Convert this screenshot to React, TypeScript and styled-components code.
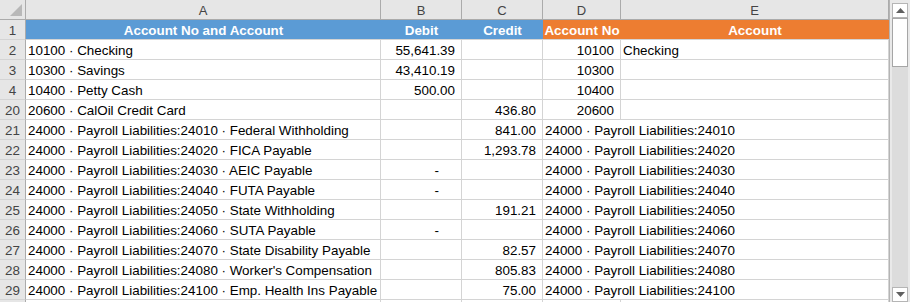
import React from 'react';
import styled, { createGlobalStyle } from 'styled-components';

const GlobalStyle = createGlobalStyle`
  html, body {
    margin: 0;
    padding: 0;
    background: #fff;
    overflow: hidden;
  }
  body {
    font-family: 'Liberation Sans', Arial, sans-serif;
  }
`;

// 한 행의 데이터
interface IRow {
  num: string;
  account: string;
  debit?: string;
  credit?: string;
  accNo: string;
  accName?: string;
  spill?: boolean;
}

const rows: IRow[] = [
  { num: '2', account: '10100 · Checking', debit: '55,641.39', accNo: '10100', accName: 'Checking' },
  { num: '3', account: '10300 · Savings', debit: '43,410.19', accNo: '10300' },
  { num: '4', account: '10400 · Petty Cash', debit: '500.00', accNo: '10400' },
  { num: '20', account: '20600 · CalOil Credit Card', credit: '436.80', accNo: '20600' },
  { num: '21', account: '24000 · Payroll Liabilities:24010 · Federal Withholding', credit: '841.00', accNo: '24000 · Payroll Liabilities:24010', spill: true },
  { num: '22', account: '24000 · Payroll Liabilities:24020 · FICA Payable', credit: '1,293.78', accNo: '24000 · Payroll Liabilities:24020', spill: true },
  { num: '23', account: '24000 · Payroll Liabilities:24030 · AEIC Payable', debit: '-', accNo: '24000 · Payroll Liabilities:24030', spill: true },
  { num: '24', account: '24000 · Payroll Liabilities:24040 · FUTA Payable', debit: '-', accNo: '24000 · Payroll Liabilities:24040', spill: true },
  { num: '25', account: '24000 · Payroll Liabilities:24050 · State Withholding', credit: '191.21', accNo: '24000 · Payroll Liabilities:24050', spill: true },
  { num: '26', account: '24000 · Payroll Liabilities:24060 · SUTA Payable', debit: '-', accNo: '24000 · Payroll Liabilities:24060', spill: true },
  { num: '27', account: '24000 · Payroll Liabilities:24070 · State Disability Payable', credit: '82.57', accNo: '24000 · Payroll Liabilities:24070', spill: true },
  { num: '28', account: "24000 · Payroll Liabilities:24080 · Worker's Compensation", credit: '805.83', accNo: '24000 · Payroll Liabilities:24080', spill: true },
  { num: '29', account: '24000 · Payroll Liabilities:24100 · Emp. Health Ins Payable', credit: '75.00', accNo: '24000 · Payroll Liabilities:24100', spill: true },
  // 화면 아래에 살짝 걸치는 다음 행 (내용 없음)
  { num: '', account: '', accNo: '' },
];

const App = () => {
  return (
    <>
      <GlobalStyle />
      <Window>
        <Sheet>
          <Corner>
            <svg width="12" height="12" viewBox="0 0 12 12">
              <polygon points="12,0 12,12 0,12" fill="#b8b8b8" />
            </svg>
          </Corner>
          {['A', 'B', 'C', 'D', 'E'].map((c) => (
            <ColHead key={c}>{c}</ColHead>
          ))}

          <RowHead>1</RowHead>
          <TitleCell fill="#5b9bd5">Account No and Account</TitleCell>
          <TitleCell fill="#5b9bd5">Debit</TitleCell>
          <TitleCell fill="#5b9bd5">Credit</TitleCell>
          <TitleCell fill="#ed7d31">Account No</TitleCell>
          <TitleCell fill="#ed7d31">Account</TitleCell>

          {rows.map((r, i) => (
            <React.Fragment key={i}>
              <RowHead>{r.num}</RowHead>
              <Cell>{r.account}</Cell>
              <NumCell dash={r.debit === '-'}>{r.debit}</NumCell>
              <NumCell dash={r.credit === '-'}>{r.credit}</NumCell>
              {r.spill ? (
                <SpillCell>{r.accNo}</SpillCell>
              ) : (
                <>
                  <NumCell dash={false}>{r.accNo}</NumCell>
                  <Cell>{r.accName}</Cell>
                </>
              )}
            </React.Fragment>
          ))}
        </Sheet>
        <ScrollBar>
          <ArrowBtn>
            <svg width="9" height="5" viewBox="0 0 9 5">
              <polygon points="0,5 9,5 4.5,0" fill="#606060" />
            </svg>
          </ArrowBtn>
          <Thumb />
          <Track />
          <ArrowBtn>
            <svg width="9" height="5" viewBox="0 0 9 5">
              <polygon points="0,0 9,0 4.5,5" fill="#606060" />
            </svg>
          </ArrowBtn>
        </ScrollBar>
      </Window>
    </>
  );
};

export default App;

const Window = styled.div`
  width: 910px;
  height: 302px;
  display: flex;
  overflow: hidden;
`;

const Sheet = styled.div`
  display: grid;
  grid-template-columns: 26px 355px 81px 81px 78px 268px;
  grid-auto-rows: 20px;
  width: 889px;
  flex-shrink: 0;
  font-size: 13.4px;
  color: #000;
`;

const Corner = styled.div`
  background: #e6e6e6;
  border-right: 1px solid #ababab;
  border-bottom: 1px solid #ababab;
  display: flex;
  align-items: flex-end;
  justify-content: flex-end;
  padding: 0 3px 3px 0;
`;

const ColHead = styled.div`
  background: #e6e6e6;
  border-right: 1px solid #ababab;
  border-bottom: 1px solid #ababab;
  display: flex;
  align-items: center;
  justify-content: center;
  color: #444;
  font-size: 13px;
  padding-top: 1px;
`;

const RowHead = styled.div`
  background: #e6e6e6;
  border-right: 1px solid #ababab;
  border-bottom: 1px solid #d4d4d4;
  display: flex;
  align-items: center;
  justify-content: center;
  color: #444;
  font-size: 13.4px;
  padding-top: 1px;
`;

const TitleCell = styled.div<{ fill: string }>`
  background: ${(props) => props.fill};
  border-bottom: 1px solid #d4d4d4;
  display: flex;
  align-items: center;
  justify-content: center;
  color: #fff;
  font-weight: 700;
  white-space: nowrap;
  overflow: hidden;
  padding-top: 1px;
`;

const Cell = styled.div`
  border-right: 1px solid #d4d4d4;
  border-bottom: 1px solid #d4d4d4;
  display: flex;
  align-items: center;
  padding: 1px 0 0 2px;
  white-space: nowrap;
  overflow: hidden;
`;

const NumCell = styled(Cell)<{ dash: boolean }>`
  justify-content: flex-end;
  padding-left: 0;
  padding-right: ${(props) => (props.dash ? '22px' : '6px')};
`;

const SpillCell = styled(Cell)`
  grid-column: span 2;
`;

const ScrollBar = styled.div`
  flex: 1;
  background: #e9e9e9;
  border-left: 1px solid #b4b4b4;
  display: flex;
  flex-direction: column;
  padding: 3px 2px 0 2px;
`;

const ArrowBtn = styled.div`
  height: 13px;
  border: 1px solid #b5b5b5;
  background: #fff;
  display: flex;
  align-items: center;
  justify-content: center;
  flex-shrink: 0;
`;

const Thumb = styled.div`
  height: 47px;
  border: 1px solid #a6a6a6;
  background: #fff;
  flex-shrink: 0;
`;

const Track = styled.div`
  flex: 1;
  background: #dcdcdc;
`;
